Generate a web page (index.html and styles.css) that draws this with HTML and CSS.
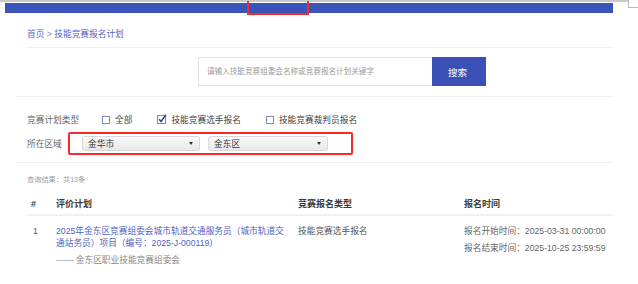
FILE: index.html
```html
<!DOCTYPE html>
<html lang="zh-CN">
<head>
<meta charset="utf-8">
<title>技能竞赛报名计划</title>
<link rel="stylesheet" href="styles.css">
</head>
<body>
<div class="chrome"><div class="chrome-line"></div><div class="chrome-corner"></div></div>
<header class="topbar"></header>
<div class="mark"></div>
<main class="wrap">
  <nav class="crumb"><a href="#">首页</a> <span class="sep">&gt;</span> <a href="#">技能竞赛报名计划</a></nav>

  <section class="search">
    <div class="search-box">
      <input class="search-input" type="text" placeholder="请输入技能竞赛组委会名称或竞赛报名计划关键字">
      <button class="search-btn" type="button">搜索</button>
    </div>
  </section>

  <section class="filters">
    <div class="filter-row">
      <span class="label label-type">竞赛计划类型</span>
      <span class="check"><span class="box"></span>全部</span>
      <span class="check"><svg class="box-svg" width="10" height="10" viewBox="0 0 10 10"><rect x="0.5" y="1.5" width="8" height="8" fill="#fff" stroke="#7a88c8"/><path d="M2.2 5.2 L4.1 7.6 L8.8 0.8" fill="none" stroke="#2c3d96" stroke-width="1.5"/></svg>技能竞赛选手报名</span>
      <span class="check"><span class="box"></span>技能竞赛裁判员报名</span>
    </div>
    <div class="filter-row row-area">
      <span class="label label-area">所在区域</span>
      <div class="area-box">
        <div class="select sel-city"><span>金华市</span><span class="arrow"></span></div>
        <div class="select sel-dist"><span>金东区</span><span class="arrow"></span></div>
      </div>
    </div>
  </section>

  <section class="results">
    <div class="count">查询结果：共13条</div>
    <div class="table">
      <div class="trow thead">
        <div class="c-no">#</div>
        <div>评价计划</div>
        <div>竞赛报名类型</div>
        <div>报名时间</div>
      </div>
      <div class="trow tbody">
        <div class="c-no c-no-body">1</div>
        <div class="c-plan">
          <a class="title" href="#">2025年金东区竞赛组委会城市轨道交通服务员（城市轨道交通站务员）项目（编号：2025-J-000119）</a>
          <div class="org">—— 金东区职业技能竞赛组委会</div>
        </div>
        <div class="c-type">技能竞赛选手报名</div>
        <div class="c-time">
          <div>报名开始时间：2025-03-31 00:00:00</div>
          <div class="t2">报名结束时间：2025-10-25 23:59:59</div>
        </div>
      </div>
    </div>
  </section>
</main>
</body>
</html>
```
FILE: styles.css
```css
* { box-sizing: border-box; }
html, body { margin: 0; padding: 0; background: #fff; }
body {
  position: relative;
  width: 638px;
  height: 284px;
  overflow: hidden;
  font-family: "Liberation Sans", "Noto Sans CJK SC", sans-serif;
  font-size: 8.7px;
  color: #555;
}
a { text-decoration: none; }

.chrome { display: flex; height: 2px; }
.chrome-line { width: 628px; height: 2px; background: #c9c9c9; }
.chrome-corner {
  position: absolute; top: 0; right: 0;
  width: 10px; height: 8px;
  border-left: 1px solid #bdbdbd; border-bottom: 1px solid #bdbdbd;
}

.topbar {
  margin: 1px 0 0 5px;
  width: 608px;
  height: 10px;
  background: #3953b8;
}
.mark {
  position: absolute;
  top: 1px; left: 247px;
  width: 62px; height: 14px;
  border: 2px solid #f52a2a;
  border-top: none;
}

.wrap { margin-left: 5px; width: 608px; }

.crumb {
  margin-left: 22px;
  padding: 14px 0 6px;
  line-height: 14px;
  border-bottom: 1px solid #efefef;
  color: #5466c4;
}
.crumb a { color: #5466c4; }
.crumb .sep { color: #7a86c8; }

.search {
  margin-left: 11px;
  padding: 9px 0 10px 182px;
  border-bottom: 1px solid #efefef;
}
.search-box { display: flex; }
.search-input {
  width: 234px; height: 29px;
  border: 1px solid #e2e2e2; border-right: none;
  padding: 0 0 0 8px;
  font-family: inherit; font-size: 7.6px; color: #333;
  outline: none; background: #fff;
}
.search-input::placeholder { color: #9a9a9a; }
.search-btn {
  width: 54px; height: 29px;
  border: none; background: #3a50b6;
  color: #fff; font-family: inherit; font-size: 9.6px;
  padding: 0; padding-right: 3px;
}

.filters {
  margin-left: 11px;
  padding: 16px 0 7px 11px;
  border-bottom: 1px solid #efefef;
}
.filter-row { display: flex; align-items: center; line-height: 14px; }
.label { color: #666; }
.label-type { width: 75px; }
.check { display: flex; align-items: center; gap: 5px; margin-right: 25px; color: #444; }
.box { width: 8px; height: 8px; border: 1px solid #7a88c8; background: #fff; }
.box-svg { display: block; margin-top: -2px; margin-right: -1px; }
.row-area { margin-top: 5px; }
.label-area { width: 41px; }
.area-box {
  display: flex; gap: 8px;
  padding: 2px 23px 2px 12px;
  border: 2px solid #f52a2a;
  border-radius: 2px;
}
.select {
  display: flex; align-items: center; justify-content: space-between;
  height: 15px;
  padding: 0 6px 0 5px;
  border: 1px solid #d8d8d8;
  border-radius: 3px;
  background: linear-gradient(#fbfbfb, #e8e8e8);
  color: #333;
}
.sel-city { width: 118px; }
.sel-dist { width: 120px; }
.arrow {
  width: 0; height: 0;
  border-left: 2px solid transparent;
  border-right: 2px solid transparent;
  border-top: 3px solid #333;
}

.results { margin-left: 22px; padding-top: 11px; }
.count { line-height: 12px; font-size: 7.2px; color: #9a9a9a; }
.table { margin-top: 12px; }
.trow { display: grid; grid-template-columns: 29px 242px 166px 1fr; }
.thead {
  line-height: 12px;
  padding-bottom: 4px;
  border-bottom: 2px solid #f1f1f1;
  font-weight: bold;
  color: #3a3a3a;
  font-size: 9px;
}
.c-no { padding-left: 4px; }
.c-no-body { padding-left: 6px; }
.tbody { padding-top: 9px; line-height: 12px; }
.title { display: block; width: 232px; color: #5062c4; }
.org { margin-top: 5px; color: #888; }
.c-type { color: #555; }
.c-time { color: #666; }
.c-time .t2 { margin-top: 5px; }
```
